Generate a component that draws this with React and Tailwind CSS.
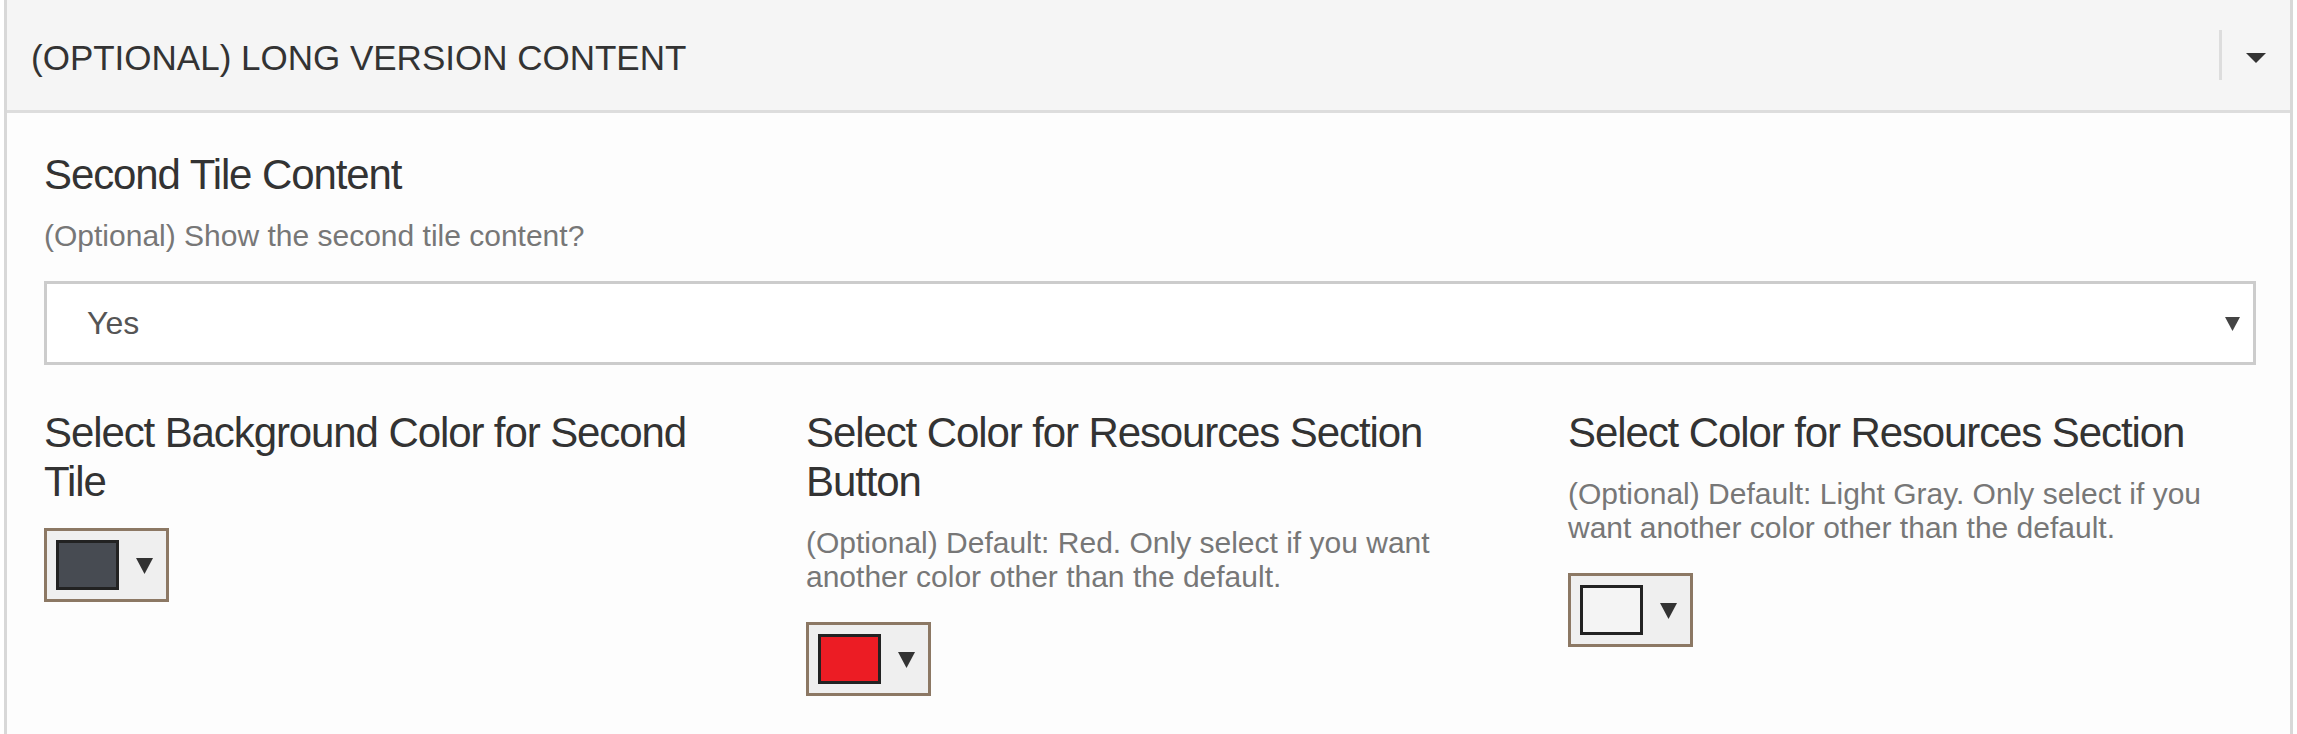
import React from 'react';

// ── Small drawn carets ────────────────────────────────────────────────────────
function Caret({ className }) {
  return (
    <svg viewBox="0 0 16 16" className={className} aria-hidden="true">
      <polygon points="0,1 16,1 8,16" fill="currentColor" />
    </svg>
  );
}

// ── Colour swatch picker ──────────────────────────────────────────────────────
function Swatch({ color, extraTop }) {
  return (
    <button
      type="button"
      className={`flex items-center gap-[17px] h-[74px] w-[125px] pl-[9px] pr-[13px] bg-[#efefef] border-[3px] border-[#8c7864] ${extraTop ? 'mt-[2px]' : ''}`}
    >
      <span className={`block w-[63px] h-[50px] border-[3px] border-[#222222] ${color}`} />
      <Caret className="w-[17px] h-[17px] text-[#333333]" />
    </button>
  );
}

// ── One colour field column ───────────────────────────────────────────────────
function ColorField({ label, help, color }) {
  return (
    <div className="flex flex-col items-start">
      <h3 className="text-[42px] leading-[49px] tracking-[-1.1px] text-[#333333] mb-[20px]">{label}</h3>
      {help && (
        <p className="text-[30px] leading-[34px] text-[#777777] mb-[28px]">{help}</p>
      )}
      <Swatch color={color} extraTop={!help} />
    </div>
  );
}

export default function App() {
  return (
    <div
      className="min-h-[734px] bg-white px-[4px]"
      style={{ fontFamily: '"Liberation Sans", Arial, sans-serif' }}
    >
      <div className="border-x-[3px] border-[#d8d8d8] bg-[#fdfdfd]">
        {/* ── Panel header ── */}
        <div className="flex items-center h-[113px] bg-[#f5f5f5] border-b-[3px] border-[#dddddd]">
          <h2 className="flex-1 pl-[24px] pt-[5px] text-[35px] leading-none text-[#333333] uppercase">
            (Optional) Long Version Content
          </h2>
          <div className="w-[3px] h-[50px] bg-[#dddddd]" />
          <div className="w-[68px] flex justify-center pt-[6px]">
            <svg viewBox="0 0 20 10" className="w-[20px] h-[10px] text-[#333333]" aria-hidden="true">
              <polygon points="0,0 20,0 10,10" fill="currentColor" />
            </svg>
          </div>
        </div>

        {/* ── Panel body ── */}
        <div className="pl-[37px] pr-[34px] pt-[37px] pb-[80px]">
          <h3 className="text-[42px] leading-[49px] tracking-[-1.1px] text-[#333333] mb-[20px]">Second Tile Content</h3>
          <p className="text-[30px] leading-[34px] text-[#777777] mb-[28px]">
            (Optional) Show the second tile content?
          </p>

          <div className="flex items-center h-[84px] bg-white border-[3px] border-[#cccccc] pl-[40px] pr-[13px]">
            <span className="flex-1 text-[32px] text-[#555555]">Yes</span>
            <Caret className="w-[15px] h-[15px] text-[#444444]" />
          </div>

          <div className="grid grid-cols-[680px_680px_680px] gap-x-[82px] mt-[43px]">
            <ColorField
              label="Select Background Color for Second Tile"
              color="bg-[#474b52]"
            />
            <ColorField
              label="Select Color for Resources Section Button"
              help="(Optional) Default: Red. Only select if you want another color other than the default."
              color="bg-[#ec1c24]"
            />
            <ColorField
              label="Select Color for Resources Section"
              help="(Optional) Default: Light Gray. Only select if you want another color other than the default."
              color="bg-[#f4f4f4]"
            />
          </div>
        </div>
      </div>
    </div>
  );
}
